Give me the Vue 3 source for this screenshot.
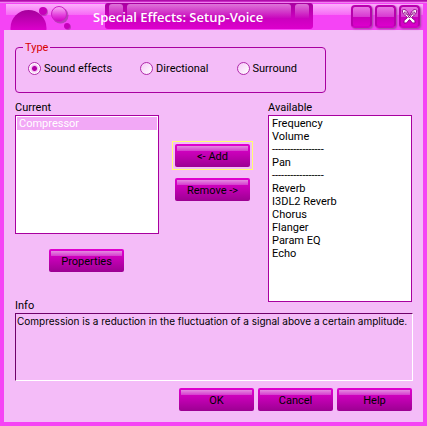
<template>
  <div class="window">
    <header class="titlebar">
      <svg class="bubbles" width="62" height="30" viewBox="0 0 62 30" aria-hidden="true">
        <defs>
          <linearGradient id="bubbleDark" x1="0" y1="0" x2="0" y2="1">
            <stop offset="0" stop-color="#a5009b" />
            <stop offset="0.6" stop-color="#e000d0" />
          </linearGradient>
          <linearGradient id="bubbleLight" x1="0" y1="0" x2="0" y2="1">
            <stop offset="0" stop-color="#f9b4f6" />
            <stop offset="0.6" stop-color="#e33bdc" />
            <stop offset="1" stop-color="#d000c4" />
          </linearGradient>
        </defs>
        <circle cx="19.500" cy="28" r="18" fill="url(#bubbleDark)" />
        <circle cx="35" cy="12" r="4" fill="#8d2a8a" opacity="0.5" />
        <circle cx="34" cy="11" r="4" fill="#c600ba" />
        <circle cx="51.500" cy="15.500" r="8" fill="#7d3a7d" opacity="0.5" />
        <circle cx="50" cy="14" r="7.500" fill="url(#bubbleLight)" stroke="#cc20c6" />
        <circle cx="59" cy="27" r="3" fill="#8d2a8a" opacity="0.5" />
        <circle cx="58" cy="26" r="3" fill="#c600ba" />
      </svg>
      <div class="title-panel">
        <i class="notch"></i>
        <i class="plate"></i>
        <i class="notch"></i>
        <h1>Special Effects: Setup-Voice</h1>
      </div>
      <div class="window-buttons">
        <button type="button" aria-label="Minimize"></button>
        <button type="button" aria-label="Maximize"></button>
        <button type="button" aria-label="Close">
          <svg width="17" height="17" viewBox="0 0 17 17" aria-hidden="true">
            <path d="M1 2.500Q4 0 6.500 4L8.500 8 10.500 4Q13 0 16 2.500 16 6 10.500 9.500L14 12.500V15H11.500L8.500 11.500 5.500 15H3V12.500L6.500 9.500Q1 6 1 2.500Z" fill="#fff" stroke="#93008a" />
            <path d="M3 4.500Q4.500 3 5.500 5T8.500 10M14 4.500Q12.500 3 11.500 5T8.500 10M3.500 5 5.500 7M13.500 5 11.500 7" fill="none" stroke="#93008a" />
          </svg>
        </button>
      </div>
    </header>

    <form class="content" @submit.prevent>
      <fieldset class="type-group">
        <legend>Type</legend>
        <label v-for="type in types" :key="type">
          <input v-model="selectedType" type="radio" name="type" :value="type" />
          {{ type }}
        </label>
      </fieldset>

      <div class="lists">
        <div class="column">
          <label for="current">Current</label>
          <select id="current" v-model="selectedCurrent" class="current-list" size="9">
            <option v-for="effect in current" :key="effect">{{ effect }}</option>
          </select>
          <button type="button" class="btn properties">Properties</button>
        </div>

        <div class="transfer">
          <button type="button" class="btn default">&lt;- Add</button>
          <button type="button" class="btn">Remove -&gt;</button>
        </div>

        <div class="column">
          <label for="available">Available</label>
          <select id="available" v-model="selectedAvailable" class="available-list" size="14">
            <option v-for="(effect, index) in available" :key="index">{{ effect }}</option>
          </select>
        </div>
      </div>

      <label for="info">Info</label>
      <textarea id="info" v-model="info" readonly></textarea>

      <footer class="actions">
        <button type="submit" class="btn">OK</button>
        <button type="button" class="btn">Cancel</button>
        <button type="button" class="btn">Help</button>
      </footer>
    </form>
  </div>
</template>

<script setup>
import { ref } from 'vue';

const types = ['Sound effects', 'Directional', 'Surround'];
const selectedType = ref('Sound effects');

const current = ['Compressor'];
const selectedCurrent = ref('Compressor');

const separator = '-----------------';
const available = [
  'Frequency',
  'Volume',
  separator,
  'Pan',
  separator,
  'Reverb',
  'I3DL2 Reverb',
  'Chorus',
  'Flanger',
  'Param EQ',
  'Echo'
];
const selectedAvailable = ref(null);

const info = ref('Compression is a reduction in the fluctuation of a signal above a certain amplitude.');
</script>

<style>
body {
  margin: 0;
  background: #f544f5;
}
</style>

<style scoped>
.window {
  box-sizing: border-box;
  padding: 0 4px 4px;
  background: #f544f5;
  color: #000;
  font: 11px/13px Roboto, "Liberation Sans", Arial, sans-serif;
}

.titlebar {
  display: flex;
  height: 30px;
  margin: 0 -4px;
  padding: 0 7px 0 9px;
  background:
    linear-gradient(#a0009a, #d838d4) 0 0 / 100% 2px no-repeat,
    linear-gradient(#ee82ee, #ee82ee) 0 2px / 100% 1px no-repeat,
    linear-gradient(#fbb0fb, #f768f6) 6px 4px / calc(100% - 10px) 11px no-repeat,
    #f544f5;
}

.bubbles {
  flex: none;
}

.title-panel {
  position: relative;
  display: flex;
  gap: 4px;
  box-sizing: border-box;
  width: 208px;
  height: 26px;
  margin: 3px auto 0 34px;
  padding: 1px 4px 0;
  border-radius: 3px;
  background: linear-gradient(#a8009f, #c800bc 50%, #dc00cc);
}

.notch,
.plate {
  height: 15px;
  border-radius: 3px 3px 0 0;
  background: linear-gradient(#dd74d8, #c800bc);
}

.notch {
  width: 14px;
}

.plate {
  flex: 1;
}

.title-panel h1 {
  position: absolute;
  top: 4px;
  left: -12px;
  margin: 0;
  color: #fff;
  font: 600 13px/20px "Open Sans", "Noto Sans", sans-serif;
  white-space: nowrap;
}

.window-buttons {
  display: flex;
  gap: 3px;
  padding-top: 5px;
}

.window-buttons button {
  display: flex;
  align-items: center;
  justify-content: center;
  width: 21px;
  height: 23px;
  padding: 0;
  border: 2px solid #b800ad;
  border-bottom-color: #d000c4;
  border-radius: 4px;
  background: linear-gradient(#e878e3, #d83bd2 50%, #c800bc 51%, #dc00cc);
  box-shadow: 1px 1px 2px #9b4a9b;
}

.window-buttons svg {
  flex: none;
}

.content {
  display: flex;
  flex-direction: column;
  padding: 11px;
  background: #f4bcf8;
}

.type-group {
  display: flex;
  gap: 28px;
  box-sizing: border-box;
  width: 311px;
  height: 52px;
  margin: 0;
  padding: 8px 12px;
  border: 1px solid #a8009f;
  border-radius: 4px;
}

.type-group legend {
  margin-left: -5px;
  padding: 0 2px;
  color: #d80000;
}

.type-group label {
  display: flex;
  align-items: center;
  gap: 3px;
  height: 13px;
  white-space: nowrap;
}

.type-group input {
  appearance: none;
  flex: none;
  width: 13px;
  height: 13px;
  margin: 0;
  border: 1px solid #b02aaa;
  border-radius: 50%;
  background: linear-gradient(135deg, #f6c8f8, #fff);
}

.type-group input:checked {
  background: radial-gradient(circle, #b000a5 2px, #f3b8f3 3px, #fff 5px);
}

.lists {
  display: flex;
  margin-top: 8px;
}

.column {
  display: flex;
  flex: 1;
  flex-direction: column;
  min-width: 0;
}

.column select {
  box-sizing: border-box;
  width: 100%;
  margin: 1px 0 0;
  padding: 1px;
  overflow: hidden;
  border: 1px solid #a8009f;
  border-radius: 0;
  outline: none;
  background: #fff;
  color: #000;
  font: inherit;
}

.column .current-list {
  height: 119px;
}

.column .available-list {
  height: 187px;
}

.column option {
  height: 13px;
  min-height: 0;
  padding: 0 2px;
}

.column option:checked {
  background: linear-gradient(#f2a8f6, #f2a8f6);
  -webkit-text-fill-color: #fff;
}

.transfer {
  display: flex;
  flex-direction: column;
  gap: 11px;
  margin: 43px 18px 0 16px;
}

.btn {
  position: relative;
  width: 75px;
  height: 23px;
  padding: 1px 0 0;
  border: 0;
  border-radius: 2px;
  background:
    linear-gradient(#e48ae0, #d63ccf) 2px 2px / calc(100% - 4px) 5px no-repeat,
    linear-gradient(#e000d0, #c800b8 40%, #9c0092);
  color: #000;
  font: inherit;
}

.btn.default::after {
  content: "";
  position: absolute;
  inset: -3px;
  border: 1px solid #ffff70;
}

.properties {
  margin: 15px auto 0 34px;
}

.content > label {
  margin-top: -3px;
}

#info {
  box-sizing: border-box;
  height: 68px;
  margin: 1px -1px 0 0;
  padding: 1px;
  overflow: hidden;
  resize: none;
  border: 1px solid;
  border-color: #70006a #fff #fff #70006a;
  outline: none;
  background: transparent;
  color: #000;
  font: 10px/13px Inter, "Liberation Sans", Arial, sans-serif;
}

.actions {
  display: flex;
  gap: 4px;
  justify-content: flex-end;
  margin-top: 7px;
}
</style>
